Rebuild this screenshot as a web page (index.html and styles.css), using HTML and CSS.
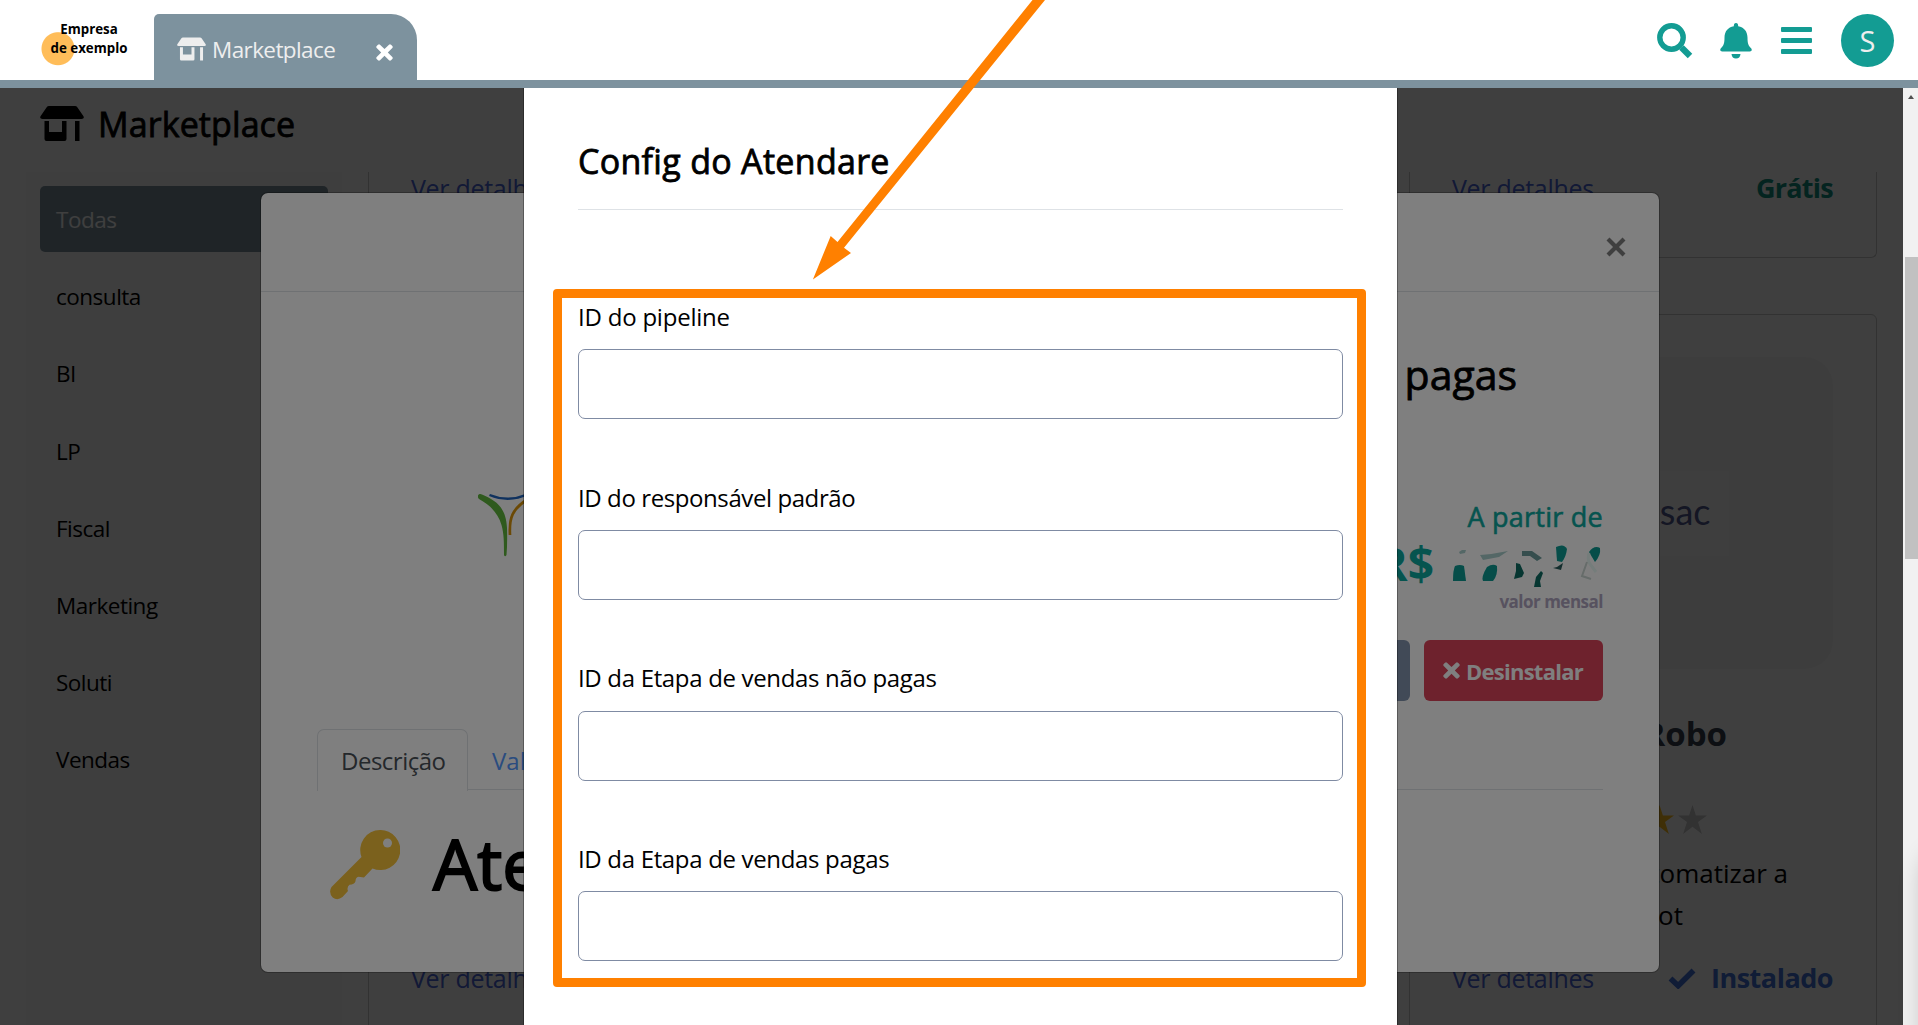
FILE: index.html
```html
<!DOCTYPE html>
<html lang="pt-BR">
<head>
<meta charset="utf-8">
<title>Marketplace</title>
<link rel="stylesheet" href="styles.css">
</head>
<body>
<svg class="defs" width="0" height="0" aria-hidden="true">
  <symbol id="store" viewBox="0 0 44 35"><path d="M9 0h26q1.500 0 2.300 1.200l6.200 9q1.200 2.800-2 2.800h-39q-3.200 0-2-2.800l6.200-9q.8-1.200 2.300-1.200zM4.500 15h4.500v11h13v-11h4.500v18q0 2-2 2h-18q-2 0-2-2zM35 15h4.500v20h-4.500z"/></symbol>
  <symbol id="times" viewBox="0 0 17 17"><path d="M4 0.700l4.500 4.400 4.500-4.400q1-.8 2 .1l1.300 1.300q.9 1 0 2l-4.500 4.400 4.500 4.500q.9 1 0 2l-1.300 1.300q-1 .9-2 0l-4.500-4.500-4.500 4.500q-1 .9-2 0l-1.300-1.300q-.9-1 0-2l4.500-4.500-4.500-4.400q-.9-1 0-2l1.300-1.300q1-.9 2-.1z"/></symbol>
  <symbol id="star" viewBox="0 0 29 29"><path d="M14.500 0l3.400 10.400h11.100l-9 6.700 3.900 11.900-9.400-7.300-9.400 7.300 3.900-11.900-9-6.700h11.100z"/></symbol>
</svg>

<header class="topbar">
  <div class="brand"><span>Empresa<br>de exemplo</span></div>
  <div class="tab">
    <svg class="tab-store"><use href="#store"/></svg>
    <span class="tab-name">Marketplace</span>
    <svg class="tab-close"><use href="#times"/></svg>
  </div>
  <nav class="tools">
    <svg width="36" height="36" viewBox="0 0 36 36"><circle cx="14.500" cy="14.500" r="11.700" fill="none" stroke="#139c93" stroke-width="5.400"/><path d="M24.500 24.500l8.500 8.500" stroke="#139c93" stroke-width="6.400" stroke-linecap="butt"/></svg>
    <svg width="32" height="36" viewBox="0 0 32 36"><path d="M16 0q2.200 0 2.200 3.200c5.800 1 9.300 5.300 9.300 11.300 0 6 .8 8 3.600 10.800 1.300 1.500.5 3.200-1.300 3.200h-27.600c-1.800 0-2.600-1.700-1.300-3.200 2.800-2.800 3.600-4.800 3.600-10.800 0-6 3.500-10.300 9.300-11.300q0-3.200 2.200-3.200zM11.500 31h9q-.5 4.500-4.500 4.500t-4.500-4.500z"/></svg>
    <svg width="31" height="27" viewBox="0 0 31 27"><path d="M1 0h29q1 0 1 1v3q0 1-1 1h-29q-1 0-1-1v-3q0-1 1-1zM1 11h29q1 0 1 1v3q0 1-1 1h-29q-1 0-1-1v-3q0-1 1-1zM1 22h29q1 0 1 1v3q0 1-1 1h-29q-1 0-1-1v-3q0-1 1-1z"/></svg>
    <span class="avatar">S</span>
  </nav>
</header>

<main class="page">
  <h1 class="page-title"><svg><use href="#store"/></svg><span>Marketplace</span></h1>
  <div class="content">
    <aside class="sidebar">
      <a class="active">Todas</a><a>consulta</a><a>BI</a><a>LP</a><a>Fiscal</a><a>Marketing</a><a>Soluti</a><a>Vendas</a>
    </aside>
    <section class="cards">
      <article class="card short"><footer><a>Ver detalhes</a></footer></article>
      <article class="card short"></article>
      <article class="card short"><footer><a>Ver detalhes</a><b class="free">Grátis</b></footer></article>
      <article class="card tall"><footer><a>Ver detalhes</a></footer></article>
      <article class="card tall"></article>
      <article class="card tall">
        <div class="cover"><div class="cover-logo">sac</div></div>
        <h2>Robo</h2>
        <div class="stars"><svg class="on"><use href="#star"/></svg><svg class="off"><use href="#star"/></svg></div>
        <p><span class="line-a">automatizar a</span><span class="line-b">bot</span></p>
        <footer><a>Ver detalhes</a><b class="installed"><svg width="28" height="21" viewBox="0 0 28 21"><path d="M2.500 10.500l7.700 7.200 15.300-15.200" fill="none" stroke="#4070d8" stroke-width="5.600"/></svg><span>Instalado</span></b></footer>
      </article>
    </section>
  </div>
  <div class="backdrop"></div>

  <section class="app-modal">
    <div class="app-head"><svg class="app-close" viewBox="0 0 20 20"><path d="M2 2l16 16M18 2l-16 16" stroke="#000" stroke-opacity=".5" stroke-width="4.200"/></svg></div>
    <div class="app-body">
      <div class="app-info">
        <svg class="app-logo" viewBox="0 0 60 64">
          <path d="M0 1.500Q1-1 4 .6C19 7 28 14 29 34Q29.500 50 28.500 61Q27 63.500 26 61C26 48 26 40 23.500 31C20 19 12 11 1 5Q-.5 3.500 0 1.500Z" fill="#5fb43c"/>
          <path d="M11.500 1Q31 9 50 0" fill="none" stroke="#1e63bd" stroke-width="2.300"/>
          <path d="M32 41C31 24 34 15 50 5" fill="none" stroke="#d6930b" stroke-width="2.700"/>
        </svg>
        <div class="pricing">
          <h2>pagas</h2>
          <div class="from">A partir de</div>
          <div class="price"><span>R$</span>
            <svg width="150" height="46" viewBox="0 0 150 46">
              <defs><filter id="soft" x="-20%" y="-20%" width="140%" height="140%"><feGaussianBlur stdDeviation=".6"/></filter></defs>
              <g filter="url(#soft)">
                <g fill="#0a9a92">
                  <path d="M2 24q5-2 9 0l2 15h-13q0-11 2-15z"/>
                  <path d="M34 25q6-4 10-1 1 9-4 15h-10q-2-4 4-14z"/>
                  <path d="M63 21l4 1 4 9-2 4-8 2 2-8z" fill="#0b6c64"/>
                  <path d="M88 29l2 2-3 8 1 6h-7l2-10z" fill="#0b6c64"/>
                  <path d="M103 5q8-4 11 2-1 8-5 13l-5-1z"/>
                  <path d="M100 26l4-1 6-4-2 7z" fill="#285a5a"/>
                  <path d="M136 10q5-7 11-4 1 7-5 14z"/>
                </g>
                <path d="M69 9h10l10 7-5 3-7-5-8 0z" fill="#6c9c9c"/>
                <path d="M6 10l3-2h4l-1 3-5 1zM27 13q14-1 28-4l-9 6-16 3z" fill="#a9cfcc"/>
                <path d="M136 11q-2 7 1 11l6 8" stroke="#eafaf6" stroke-width="3" fill="none"/>
                <path d="M134 20l-5 14 9 3" stroke="#ccd8d4" stroke-width="2" fill="none"/>
              </g>
            </svg>
          </div>
          <div class="monthly">valor mensal</div>
          <div class="actions"><button class="configure"></button><button class="remove"><svg><use href="#times"/></svg><span>Desinstalar</span></button></div>
        </div>
      </div>
      <nav class="app-tabs"><a class="current">Descrição</a><a>Val</a></nav>
      <h2 class="doc-title">
        <svg width="70" height="70" viewBox="0 0 70 70"><path fill-rule="evenodd" d="M50 0a20 20 0 1 1-7.500 38.400l-8.500 9-5.500-.7q-3 .7-3 4.500-1 3.400-6 3.600-3 2.500-1.500 6.200l-5.500 6q-5 4-9.800 0.500-4.500-5-1.200-10.500l30-30a20 20 0 0 1 18.500-27z" fill="#f7c23a"/><circle cx="57.500" cy="13" r="4.500" fill="#fff"/></svg>
        <span>Ate</span>
      </h2>
    </div>
  </section>
  <div class="backdrop"></div>

  <section class="config-modal">
    <h2>Config do Atendare</h2>
    <form>
      <label><span class="w1">ID do pipeline</span><input type="text"></label>
      <label><span class="w2">ID do responsável padrão</span><input type="text"></label>
      <label><span class="w3">ID da Etapa de vendas não pagas</span><input type="text"></label>
      <label><span class="w3">ID da Etapa de vendas pagas</span><input type="text"></label>
    </form>
  </section>
  <div class="scrollbar"><i class="up"></i><i class="thumb"></i></div>
  <div class="corner-shade"></div>
</main>

<div class="highlight"></div>
<svg class="arrow" width="260" height="290" viewBox="800 0 260 290"><path d="M812.900 279.500L830.700 236L837.500 242L1032.500 0H1045L844 247.700L851 253Z" fill="#ff8000"/></svg>
</body>
</html>
```

FILE: styles.css
```css
* { box-sizing: border-box; }
body {
  margin: 0;
  width: 1918px;
  height: 1025px;
  overflow: hidden;
  position: relative;
  background: #fff;
  color: #000;
  font-family: "Open Sans", "Noto Sans", sans-serif;
  font-size: 22.500px;
}
h1, h2, p { margin: 0; font-weight: 500; }
h1, .pricing h2, .config-modal h2 { -webkit-text-stroke: .8px currentColor; }
svg { display: block; flex: none; }
.defs { position: absolute; }
span, a, b, .from, .monthly { white-space: nowrap; }

/* top bar */
.topbar { height: 88px; border-bottom: 8px solid #7d929e; display: flex; align-items: flex-start; }
.brand {
  width: 154px; height: 80px; padding: 20px 0 0 24px;
  text-align: center; font-size: 13.300px; line-height: 18.700px; font-weight: 700;
  background: radial-gradient(circle at 58px 48.700px, #ffbd59 16px, transparent 17px);
}
.tab {
  width: 263px; height: 66px; margin-top: 14px; padding: 0 24px 0 23px;
  display: flex; align-items: center; background: #7d929e; border-radius: 5px 26px 0 0; color: #eee; fill: #eee;
}
.tab-store { width: 29px; height: 24px; margin: 3px 6px 0 0; }
.tab-name { line-height: 30px; margin-top: 5px; letter-spacing: -.6px; }
.tab-close { width: 17px; height: 17px; margin: 10px 0 0 auto; fill: #fff; }
.tools { display: flex; align-items: center; margin: 14px 24px 0 auto; fill: #139c93; gap: 29px; }
.tools svg:first-child { margin-right: -2px; }
.avatar { width: 53px; height: 53px; border-radius: 50%; background: #139c93; color: #eee; font-size: 29px; line-height: 54px; text-align: center; }

/* marketplace page */
.page { position: relative; height: 937px; overflow: hidden; }
.page-title { height: 84px; padding: 18px 0 0 40px; display: flex; align-items: flex-start; gap: 14px; font-size: 34px; line-height: 36px; letter-spacing: .1px; }
.page-title svg { width: 44px; height: 35px; }
.content { display: flex; padding-left: 26px; height: 853px; }
.sidebar { width: 316px; background: #f8f8f8; padding: 14px; display: flex; flex-direction: column; gap: 11.200px; letter-spacing: -.5px; }
.sidebar a { flex: none; height: 66px; line-height: 68px; padding-left: 16px; border-radius: 5px; }
.sidebar .active { background: #7d929e; color: #fff; }
.cards { margin-left: 26px; display: grid; grid-template-columns: repeat(3, 468px); grid-template-rows: 86px 780px; gap: 56px 52.500px; }
.card { border: 1px solid #c8c8c8; border-radius: 6px; padding: 0 43px 0 42px; display: flex; flex-direction: column; }
.card.short { border-top: 0; border-radius: 0 0 6px 6px; }
.card footer { display: flex; justify-content: space-between; line-height: 36px; color: #4864d8; font-size: 25px; letter-spacing: -.3px; margin-top: -2px; }
.card.tall footer { margin-top: auto; margin-bottom: 97px; }
.free { color: #119080; font-size: 27px; letter-spacing: -.75px; }
.installed { display: flex; align-items: center; gap: 15px; color: #4070d8; font-size: 27px; letter-spacing: -.5px; }
.cover { height: 312px; margin-top: 42px; flex: none; border-radius: 28px; background: #f7f7f7; display: flex; align-items: center; justify-content: center; }
.cover-logo { width: 172px; height: 85px; background: #fbfbfb; text-align: right; padding-right: 18px; font: 36px/80px Lato, sans-serif; color: #505a90; }
.card h2 { font-size: 33px; line-height: 44px; font-weight: 700; color: #343f4c; margin: 43px 106px 0 0; text-align: right; }
.stars { display: flex; justify-content: flex-end; gap: 4px; margin: 49px 126px 0 0; }
.stars svg { width: 29px; height: 29px; }
.on { fill: #ffbe1e; }
.off { fill: #c8c8c8; }
.card p { display: flex; flex-direction: column; align-items: flex-end; font-size: 26px; line-height: 41.500px; margin-top: 19px; padding-right: 45px; }
.line-b { margin-right: 105px; }

.backdrop { position: absolute; inset: 0; background: rgba(0, 0, 0, .5); }

/* application details window */
.app-modal { position: absolute; left: 260px; top: 104px; width: 1400px; height: 781px; background: #fff; background-clip: padding-box; border: 1px solid rgba(0, 0, 0, .25); border-radius: 8px; }
.app-head { height: 99px; border-bottom: 1px solid #dee2e6; display: flex; justify-content: flex-end; padding: 44px 33px 0 0; }
.app-close { width: 20px; height: 20px; }
.app-body { padding: 0 56px; }
.app-info { display: flex; justify-content: space-between; height: 437px; }
.app-logo { width: 60px; height: 64px; margin: 202px 0 0 161px; }
.pricing { padding-top: 57px; display: flex; flex-direction: column; align-items: flex-end; color: #0ca89e; }
.pricing h2 { font-size: 41px; line-height: 50px; color: #000; margin-right: 86px; }
.from { font-size: 27px; line-height: 34px; margin-top: 101px; letter-spacing: .25px; -webkit-text-stroke: .6px currentColor; }
.price { display: flex; font-size: 46px; line-height: 50px; font-weight: 700; margin-top: 4px; gap: 19px; }
.price svg { margin-top: 4px; }
.monthly { font-size: 17px; line-height: 24px; font-weight: 700; color: #aea4be; margin-top: 2px; letter-spacing: -.5px; }
.actions { display: flex; gap: 14px; margin-top: 26px; }
button { border: 0; border-radius: 6px; height: 61px; font: inherit; font-weight: 700; color: #fff; padding: 0; }
.configure { width: 180px; background: #8294ae; }
.remove { width: 179px; background: #dc445a; display: flex; align-items: center; padding-left: 19px; gap: 6px; fill: #fff; }
.remove svg { width: 17px; height: 17px; }
.remove span { font-size: 22px; letter-spacing: -.75px; margin-top: 1px; }
.app-tabs { display: flex; height: 61px; border-bottom: 1px solid #dee2e6; font-size: 24px; line-height: 61px; color: #5498ff; }
.app-tabs a { padding: 1px 24px; }
.app-tabs .current { height: 62px; width: 151px; padding: 0 23px; border: 1px solid #dee2e6; border-bottom: 0; border-radius: 7px 7px 0 0; background: #fff; color: #495057; letter-spacing: -.5px; }
.doc-title { display: flex; gap: 33px; margin: 33px 0 0 13px; font-size: 70px; line-height: 80px; -webkit-text-stroke: 2px currentColor; }
.doc-title svg { margin-top: 7px; }

/* configuration window */
.config-modal { position: absolute; left: 523px; top: 0; width: 875px; height: 937px; padding: 53px 54px 0; background: #fff; background-clip: padding-box; border: solid rgba(0, 0, 0, .3); border-width: 0 1px; }
.config-modal h2 { font-size: 34px; line-height: 40px; padding-bottom: 28px; border-bottom: 1px solid #dee2e6; letter-spacing: .3px; }
form { display: flex; flex-direction: column; gap: 60.500px; margin-top: 89px; }
label { display: flex; flex-direction: column; gap: 14.200px; font-size: 24px; line-height: 36px; }
.w1 { letter-spacing: -.22px; }
.w2 { letter-spacing: -.41px; }
.w3 { letter-spacing: -.33px; }
input { height: 70px; width: 100%; border: 1px solid #7f8ba3; border-radius: 7px; background: #fff; }

.scrollbar { position: absolute; right: 0; top: 0; bottom: 0; width: 15px; background: #f1f1f1; }
.up { position: absolute; left: 5px; top: 7px; border: solid transparent; border-width: 0 3.500px 4px; border-bottom-color: #505050; }
.thumb { position: absolute; left: 2px; right: 0; top: 169px; height: 302px; background: #c1c1c1; }
.corner-shade { position: absolute; left: 1922px; top: 760px; width: 60px; height: 240px; border-radius: 30px; box-shadow: 0 0 24px rgba(0, 0, 0, .2); }

/* annotations */
.highlight { position: absolute; left: 553px; top: 289px; width: 813px; height: 698px; border: 9px solid #ff8000; border-radius: 4px; }
.arrow { position: absolute; left: 800px; top: 0; }
```
